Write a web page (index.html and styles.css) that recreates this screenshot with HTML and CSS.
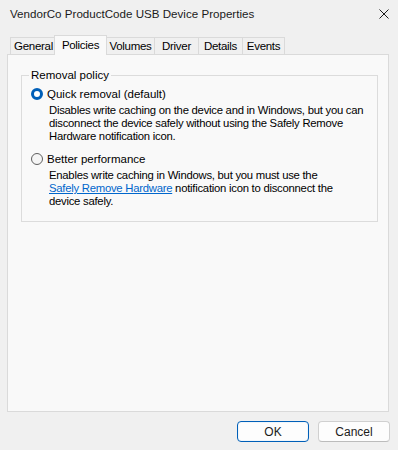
FILE: index.html
```html
<!DOCTYPE html>
<html lang="en">
<head>
    <meta charset="UTF-8">
    <title>VendorCo ProductCode USB Device Properties</title>
    <link rel="stylesheet" href="styles.css">
</head>
<body>

<div class="window">

    <!-- Barra de titulo -->
    <div class="titlebar">
        <span class="title">VendorCo ProductCode USB Device Properties</span>
        <span class="close">
            <svg width="10" height="10" viewBox="0 0 10 10">
                <path d="M0.5 0.5 L9.5 9.5 M9.5 0.5 L0.5 9.5" stroke="#1b1b1b" stroke-width="1" fill="none"/>
            </svg>
        </span>
    </div>

    <!-- Abas -->
    <div class="tabs">
        <div class="tab t-general">General</div>
        <div class="tab active t-policies">Policies</div>
        <div class="tab t-volumes">Volumes</div>
        <div class="tab t-driver">Driver</div>
        <div class="tab t-details">Details</div>
        <div class="tab t-events">Events</div>
    </div>

    <div class="panel">
        <fieldset class="group">
            <legend>Removal policy</legend>

            <div class="option">
                <span class="radio checked"></span>
                <span>Quick removal (default)</span>
            </div>
            <div class="desc">
                Disables write caching on the device and in Windows, but you can<br>
                disconnect the device safely without using the Safely Remove<br>
                Hardware notification icon.
            </div>

            <div class="option second">
                <span class="radio"></span>
                <span>Better performance</span>
            </div>
            <div class="desc">
                Enables write caching in Windows, but you must use the<br>
                <a href="#">Safely Remove Hardware</a> notification icon to disconnect the<br>
                device safely.
            </div>
        </fieldset>
    </div>

    <div class="footer">
        <button class="btn default">OK</button>
        <button class="btn">Cancel</button>
    </div>

</div>

</body>
</html>
```

FILE: styles.css
```css
body {
    margin: 0;
    font-family: "Liberation Sans", Arial, sans-serif;
    font-size: 11.5px;
    color: #000;
    background-color: #f0f0f0;
}
.window {
    width: 398px;
    height: 450px;
    display: flex;
    flex-direction: column;
}
.titlebar {
    height: 26px;
    display: flex;
    align-items: center;
    justify-content: space-between;
    padding: 0 9px 0 10px;
    font-size: 11.6px;
  }
  .title {
    color: #1b1b1b;
  }
  .close {
    display: flex;
    padding-top: 1px;
  }
  .tabs {
    display: flex;
    align-items: flex-end;
    height: 19px;
    margin: 9px 0 0 10px;
    position: relative;
    z-index: 1;
  }
  .tab {
    height: 17px;
    line-height: 16px;
    text-align: center;
    border: 1px solid #dadada;
    border-bottom: none;
    box-sizing: border-box;
    background-color: #f0f0f0;
    margin-right: -1px;
    letter-spacing: -0.3px;
  }
  .tab.active {
    height: 20px;
    line-height: 18px;
    margin: 0 -1px -1px -2px;
    background-color: #f9f9f9;
    position: relative;
  }
  .t-general { width: 47px; }
  .t-policies { width: 53px; }
  .t-volumes { width: 49px; }
  .t-driver { width: 45px; }
  .t-details { width: 45px; }
  .t-events { width: 43px; }
  .panel {
    height: 358px;
    box-sizing: border-box;
    margin: 0 9px 0 7px;
    padding: 14px 10px 0 13px;
    border: 1px solid #dadada;
    background-color: #f9f9f9;
  }
  .group {
    margin: 0;
    padding: 4px 9px 13px 9px;
    border: 1px solid #dcdcdc;
    min-width: 0;
  }
  legend {
    padding: 0 2px;
    margin-left: -2px;
    line-height: 13px;
  }
  .option {
    display: flex;
    align-items: center;
    height: 16px;
  }
  .option.second {
    margin-top: 8px;
  }
  .radio {
    width: 12px;
    height: 12px;
    box-sizing: border-box;
    border-radius: 50%;
    border: 1px solid #5f5f5f;
    background-color: #f5f5f5;
    margin-right: 4px;
  }
  .radio.checked {
    border: 3.5px solid #005fb8;
    background-color: #fff;
  }
  .desc {
    margin: 2px 0 0 18px;
    line-height: 13px;
    font-size: 11.3px;
    letter-spacing: -0.25px;
    white-space: nowrap;
  }
  .desc a {
    color: #0066cc;
  }
  .footer {
    display: flex;
    justify-content: flex-end;
    gap: 9px;
    padding: 9px 8px 0 0;
  }
  .btn {
    width: 72px;
    height: 21px;
    font-family: inherit;
    font-size: 12px;
    color: #1b1b1b;
    background-color: #fdfdfd;
    border: 1px solid #d0d0d0;
    border-bottom-color: #bcbcbc;
    border-radius: 4px;
  }
  .btn.default {
    border: 1px solid #005fb8;
    box-shadow: inset 0 0 0 1px #f0f6fb;
  }
```
